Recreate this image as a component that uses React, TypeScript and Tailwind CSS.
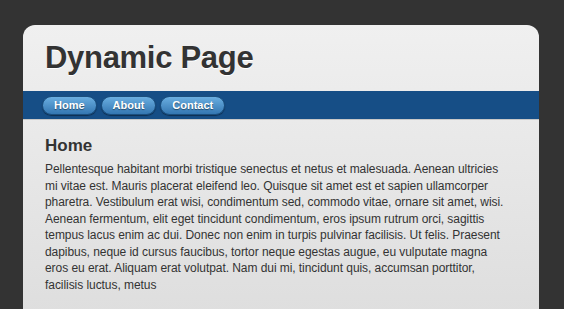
import React from 'react';

const links = ['Home', 'About', 'Contact'];

const App: React.FC = () => {
  return (
    <div className="h-[309px] w-[564px] overflow-hidden bg-[#333333] pt-[25px] pl-[23px] pr-[25px] font-['Liberation_Sans',Arial,sans-serif]">
      <div className="h-[320px] rounded-t-[12px] bg-gradient-to-b from-[#f0f0f0] to-[#dcdcdc]">
        {/* header */}
        <h1 className="px-[22px] pt-[16px] pb-[17px] text-[31px] font-bold leading-[33px] tracking-[-0.3px] text-[#333333] [text-shadow:0_1px_0_#fff]">
          Dynamic Page
        </h1>
        {/* nav */}
        <nav className="flex h-[28px] items-center gap-[4px] bg-[#164e86] px-[19px] shadow-[0_1px_0_#c8c8c8]">
          {links.map((l) => (
            <button
              key={l}
              className="h-[19px] rounded-full border border-[#1b4f7e] bg-gradient-to-b from-[#6aaee0] to-[#3477b2] px-[11px] text-[11px] font-bold leading-[17px] text-white shadow-[0_1px_1px_rgba(0,0,0,0.4)] [text-shadow:0_1px_1px_rgba(0,0,0,0.45)]"
            >
              {l}
            </button>
          ))}
        </nav>
        {/* content */}
        <div className="px-[22px] pt-[17px]">
          <h2 className="text-[17px] font-bold leading-[20px] text-[#333333]">Home</h2>
          <p className="mt-[5px] w-[466px] text-[12px] leading-[16.5px] tracking-[-0.06px] text-[#333333]">
            Pellentesque habitant morbi tristique senectus et netus et malesuada. Aenean ultricies mi vitae est. Mauris placerat eleifend leo. Quisque sit amet est et sapien ullamcorper pharetra. Vestibulum erat wisi, condimentum sed, commodo vitae, ornare sit amet, wisi. Aenean fermentum, elit eget tincidunt condimentum, eros ipsum rutrum orci, sagittis tempus lacus enim ac dui. Donec non enim in turpis pulvinar facilisis. Ut felis. Praesent dapibus, neque id cursus faucibus, tortor neque egestas augue, eu vulputate magna eros eu erat. Aliquam erat volutpat. Nam dui mi, tincidunt quis, accumsan porttitor, facilisis luctus, metus
          </p>
        </div>
      </div>
    </div>
  );
};

export default App;
